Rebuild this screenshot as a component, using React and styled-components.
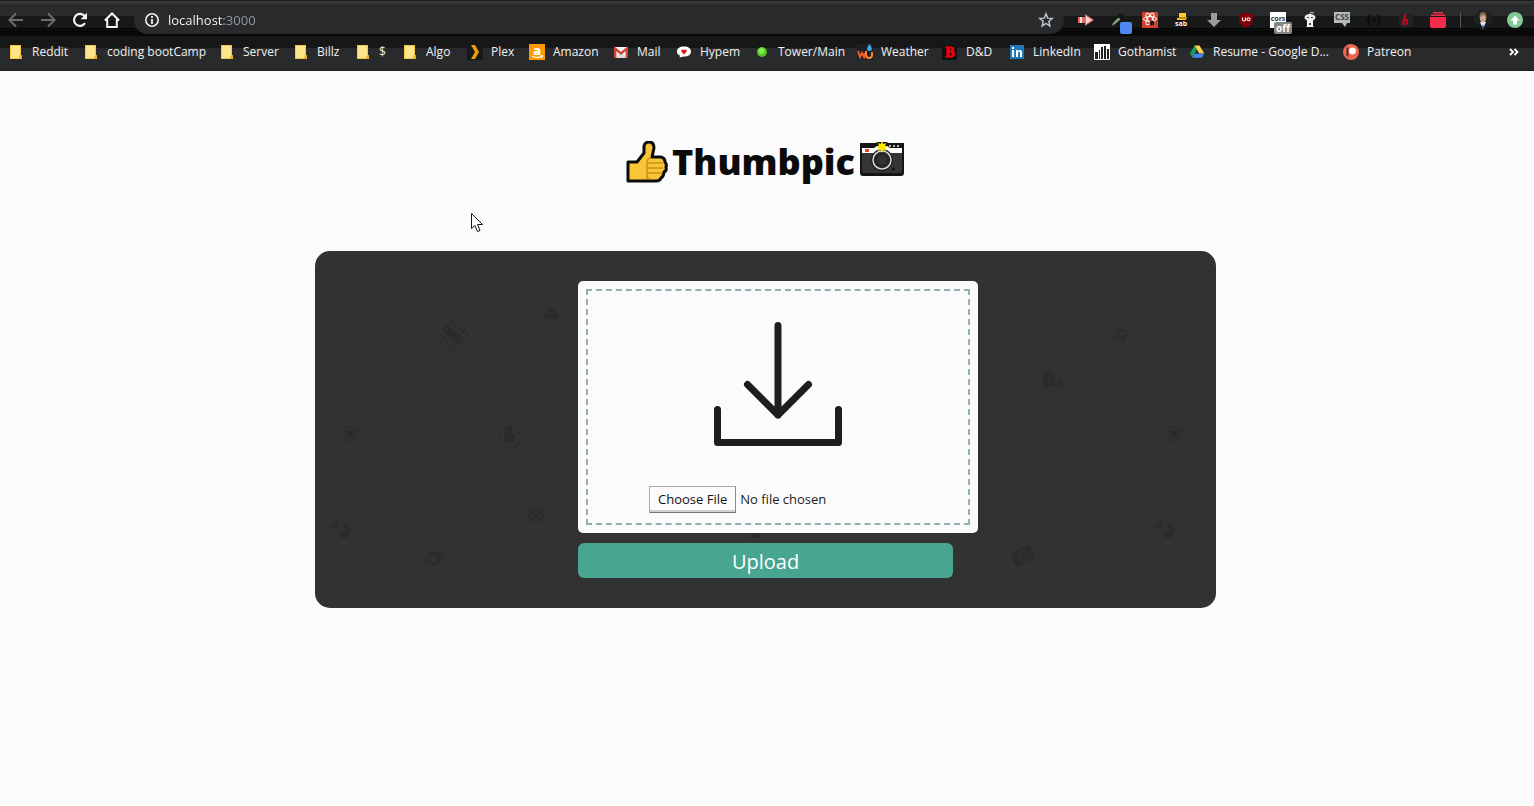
import React from "react";
import styled, { createGlobalStyle } from "styled-components";

const ui = `"Segoe UI", "Open Sans", "Noto Sans", sans-serif`;

const GlobalStyle = createGlobalStyle`
  *, *::before, *::after { box-sizing: border-box; }
  body {
    margin: 0;
    background: #fbfbfb;
    font-family: ${ui};
    color: #1e1f1c;
  }
`;

/* ---------- browser chrome ---------- */

const Toolbar = styled.div`
  display: flex;
  align-items: center;
  height: 36px;
  padding: 6px 3px 2px 0;
  background: linear-gradient(
    #1c1c1c 0 1px, #3a3a3a 1px 2px, #333334 2px 4px, #292a2c 4px 16px,
    #181818 16px 28px, #050505 28px 29px, #101010 29px 30px, #080808 30px 36px
  );
`;

const IconButton = styled.button`
  display: grid;
  place-items: center;
  flex: none;
  width: 32px;
  height: 28px;
  padding: 0;
  border: 0;
  background: none;
  color: ${(p) => (p.$dim ? "#6d6d6d" : "#f5f5f5")};
  svg { width: 16px; height: 16px; overflow: visible; }
`;

const AddressBar = styled.div`
  display: flex;
  align-items: center;
  flex: 1;
  min-width: 0;
  height: 28px;
  margin: 0 6px;
  padding: 0 10px;
  gap: 8px;
  border-radius: 14px;
  background: #292a2c;
  color: #eeeeee;
  svg { flex: none; width: 16px; height: 16px; }
`;

const AddressInput = styled.input`
  flex: 1;
  min-width: 0;
  padding: 0;
  border: 0;
  outline: 0;
  font: 13px/20px ${ui};
  color: transparent;
  background: linear-gradient(90deg, #ffffff 56px, #949ba2 56px);
  background-clip: text;
  -webkit-background-clip: text;
`;

const Divider = styled.span`
  flex: none;
  width: 1px;
  height: 16px;
  margin: 0 6px;
  background: #555555;
`;

const Bookmarks = styled.nav`
  display: flex;
  align-items: center;
  height: 35px;
  padding: 0 12px 4px 8px;
  overflow: hidden;
  background: linear-gradient(#171717 0 12px, #292a2c 12px 34px, #1f1f20 34px 35px);
`;

const Bookmark = styled.a`
  display: flex;
  align-items: center;
  flex: none;
  gap: 8px;
  width: ${(p) => p.$width}px;
  color: #f1f1f1;
  font-size: 12px;
  line-height: 16px;
  text-decoration: none;
  white-space: nowrap;
  svg { flex: none; width: 16px; height: 16px; overflow: visible; }
`;

const MoreButton = styled.button`
  margin-left: auto;
  padding: 0;
  border: 0;
  background: none;
  color: #ffffff;
  svg { display: block; width: 16px; height: 16px; }
`;

/* ---------- page ---------- */

const Page = styled.main`
  position: relative;
  display: flex;
  flex-direction: column;
  align-items: center;
  gap: 68px;
  padding: 70px 3px 64px 0;
`;

const Title = styled.h1`
  display: flex;
  align-items: center;
  gap: 4px;
  height: 42px;
  margin: 0;
  color: #0b0b0b;
  font: 800 36px/42px "Baloo", "Open Sans", sans-serif;
`;

const Thumb = styled.svg`
  width: 42px;
  height: 42px;
`;

const Camera = styled.svg`
  width: 46px;
  height: 36px;
  align-self: flex-start;
`;

const Cursor = styled.svg`
  position: absolute;
  left: 471px;
  top: 142px;
  width: 13px;
  height: 20px;
`;

const Card = styled.section`
  position: relative;
  width: 90%;
  max-width: 901px;
  padding: 30px;
  border-radius: 15px;
  background: #323232;
  overflow: hidden;
`;

const Pattern = styled.svg`
  position: absolute;
  inset: 0;
  width: 100%;
  height: 100%;
  color: #2a2b2c;
`;

const UploadForm = styled.form`
  position: relative;
  display: flex;
  flex-direction: column;
  gap: 10px;
  width: 375px;
  margin: 0 auto;
`;

const DropZone = styled.label`
  display: flex;
  flex-direction: column;
  align-items: center;
  gap: 37px;
  width: 400px;
  padding: 40px 0 20px;
  border-radius: 5px;
  background: #fbfbfb;
  outline: 2px dashed #92b0b3;
  outline-offset: -10px;
`;

const DropArrow = styled.svg`
  width: 130px;
  height: 128px;
`;

const FileInput = styled.input`
  width: 258px;
  height: 27px;
  color: #1c1c1c;
  font: 13px/19px ${ui};
  &::file-selector-button {
    height: 27px;
    padding: 1px 8px;
    border: 1px solid #a9a9a9;
    border-right-color: #8a8a8a;
    border-bottom-color: #757575;
    border-radius: 1px;
    background: #fbfbfb;
    box-shadow: inset 0 -2px #d2d2d2;
    color: #111111;
    font: inherit;
  }
`;

const UploadButton = styled.button`
  height: 35px;
  padding: 2px 0 0;
  border: 0;
  border-radius: 6px;
  background: #47a590;
  color: #ffffff;
  font: 20px/30px ${ui};
`;

/* ---------- icons ---------- */

const Svg = ({ children, ...rest }) => (
  <svg viewBox="0 0 16 16" fill="none" aria-hidden="true" {...rest}>{children}</svg>
);

const icons = {
  back: <Svg stroke="currentColor" strokeWidth="2"><path d="M15 8H2M8 1.500 1.500 8 8 14.500" /></Svg>,
  forward: <Svg stroke="currentColor" strokeWidth="2"><path d="M1 8h13M8 1.500 14.500 8 8 14.500" /></Svg>,
  reload: (
    <Svg>
      <path d="M13 11.200A6 6 0 1 1 12.600 4" stroke="currentColor" strokeWidth="2.200" />
      <path d="M15 .8v6.400H8.600z" fill="currentColor" />
    </Svg>
  ),
  home: <Svg stroke="currentColor" strokeWidth="2"><path d="M.8 8.500 8 1.500l7.200 7M3.200 7v8h9.600V7" /></Svg>,
  info: (
    <Svg>
      <circle cx="8" cy="8" r="6.200" stroke="currentColor" strokeWidth="1.600" />
      <path d="M8 7v5M8 4v2" stroke="currentColor" strokeWidth="1.800" />
    </Svg>
  ),
  star: <Svg stroke="#c3cbd0" strokeWidth="1.400"><path d="m8 1.800 1.700 4.300 4.600.3-3.500 3 1.100 4.500L8 11.500l-3.900 2.400 1.100-4.500-3.500-3 4.600-.3z" /></Svg>,
  folder: (
    <Svg>
      <path d="M2 1h11v10l1 1v3H2z" fill="#f2c744" />
      <path d="M3 2h9v9l-1 3H3z" fill="#fde58c" />
      <path d="M12 11h2v4h-3z" fill="#e8b52c" />
    </Svg>
  ),
  plex: <Svg><path d="M0 0h16v16H0z" fill="#19191a" /><path d="M4 1h4l4 7-4 7H4l4-7z" fill="#e5a00d" /></Svg>,
  amazon: (
    <Svg>
      <path d="M0 0h16v16H0z" fill="#f90" />
      <text x="8" y="11" textAnchor="middle" fill="#fff" fontSize="13" fontWeight="800" fontFamily="Open Sans, sans-serif">a</text>
      <path d="M3 12q5 3 10 0M11.500 11.500l2 .3-.5 2" stroke="#fff" strokeWidth="1.100" />
    </Svg>
  ),
  mail: (
    <Svg>
      <path d="M1 3h14v11H1z" fill="#f5f5f5" />
      <path d="m1 14 7-6 7 6z" fill="#dedede" />
      <path d="M2.200 14V4.500L8 9.500l5.800-5V14" stroke="#d54335" strokeWidth="2.400" />
    </Svg>
  ),
  hypem: (
    <Svg>
      <path d="M8 2.500c4.500 0 7 2 7 5s-2.500 5-7 5l-4.500 1 .5-2C2 11 1 9.500 1 7.500c0-3 2.500-5 7-5z" fill="#fff" />
      <path d="M8 10.500 5.600 8C4.500 6.200 6.500 4.500 8 6 9.500 4.500 11.500 6.200 10.400 8z" fill="#e3131b" />
    </Svg>
  ),
  tower: <Svg><circle cx="8" cy="8" r="5" fill="#4fc520" /><circle cx="7.500" cy="7" r="3" fill="#86e85a" /></Svg>,
  weather: (
    <Svg>
      <path d="M0 0h16v16H0z" fill="#1d2024" />
      <path d="M1 7l2 6 2-4 2 4 1-4" stroke="#f15a29" strokeWidth="2" />
      <path d="M9 7v4q0 3 3 3t3-3V8" stroke="#f5882c" strokeWidth="2" />
      <path d="M12.500 0q-5 7 0 7t0-7" fill="#3eaee8" />
    </Svg>
  ),
  dnd: (
    <Svg>
      <path d="M0 1h15v15H0z" fill="#111" />
      <text x="8" y="13" textAnchor="middle" fill="#f0000c" stroke="#f0000c" strokeWidth="1" fontSize="14" fontWeight="700" fontFamily="Liberation Serif, serif">B</text>
    </Svg>
  ),
  linkedin: (
    <Svg>
      <path d="M1 1h14v14H1z" fill="#2478b7" />
      <path d="M3 6h2v7H3zM3 3h2v2H3zM7 6h2v1q4-3 4 2v4h-2V9q0-2-2-.5V13H7z" fill="#fff" />
    </Svg>
  ),
  gothamist: (
    <Svg>
      <path d="M0 0h16v16H0z" fill="#fff" />
      <path d="M1 8h3v7H1zM5 6h1v9H5zM7 3h2v12H7zM10 2h2v13h-2zM13 5h2v10h-2z" fill="#222" />
    </Svg>
  ),
  drive: (
    <Svg>
      <path d="M5.500 1.500 1 9.500l2.300 4L8 5.500z" fill="#149e5e" />
      <path d="M5.500 1.500h5l4.800 8h-5z" fill="#ffd04b" />
      <path d="M5.500 9.800h9.800l-2.500 4H3.300z" fill="#4286f5" />
    </Svg>
  ),
  patreon: (
    <Svg>
      <circle cx="8" cy="8" r="8" fill="#f0664f" />
      <path d="M3.500 3.500h1.800v9H3.500z" fill="#3a2a42" />
      <circle cx="9.500" cy="7" r="3.400" fill="#fff" />
    </Svg>
  ),
  more: <Svg stroke="currentColor" strokeWidth="1.800"><path d="m4 5 3 3-3 3M8.500 5l3 3-3 3" /></Svg>,
};

const extensions = [
  ["Video", <Svg><path d="M0 5h7V2l9 6-9 6v-3H0z" fill="#e06c68" /><path d="M2 5h2v6H2zM8 4l6 4-6 4z" fill="#ffd8d2" /></Svg>],
  ["Color picker", <Svg><path d="m2 14 1-3 7-7 2 2-7 6z" fill="#87a88b" /><path d="m8 3 5 5M10 5l3-3" stroke="#161616" strokeWidth="3" /><rect x="10" y="10" width="12" height="12" rx="2" fill="#4f87f5" /></Svg>],
  ["React tools", <Svg><path d="M0 0h16v16H0z" fill="#d2402e" /><g stroke="#fff"><ellipse cx="8" cy="7" rx="6.500" ry="2.500" /><ellipse cx="8" cy="7" rx="6.500" ry="2.500" transform="rotate(60 8 7)" /><ellipse cx="8" cy="7" rx="6.500" ry="2.500" transform="rotate(120 8 7)" /></g><circle cx="10" cy="11" r="2.500" fill="#2b1512" /></Svg>],
  ["Sab", <Svg><path d="M5 1h7v7H3V6h2z" fill="#ffcc25" /><path d="M5 5h8v2H4z" fill="#c48b12" /><path d="M1 8h12v7H1z" fill="#111" /><text x="7" y="14" textAnchor="middle" fill="#fff" fontSize="7" fontWeight="700" fontFamily="Open Sans, sans-serif">sab</text></Svg>],
  ["Download", <Svg><path d="M5 1h6v7h4l-7 7-7-7h4z" fill="#9b9b9b" /></Svg>],
  ["Blocker", <Svg><path d="M8 .5q3 2 7 1.500v5q0 6-7 9-7-3-7-9V2q4 .5 7-1.500z" fill="#810008" /><path d="M4.500 5.500v2q0 1.500 1.500 1.500t1.500-1.500v-2" stroke="#fff" strokeWidth="1.100" /><circle cx="10.500" cy="7.300" r="1.500" stroke="#fff" strokeWidth="1.100" /></Svg>],
  ["CORS", <Svg><path d="M0 0h16v16H0z" fill="#fff" /><text x="8" y="9" textAnchor="middle" fill="#333" fontSize="7" fontWeight="700" fontFamily="Open Sans, sans-serif">cors</text><rect x="4" y="10" width="18" height="12" rx="2" fill="#858585" /><text x="13" y="20" textAnchor="middle" fill="#fff" fontSize="10" fontWeight="700" fontFamily="Open Sans, sans-serif">off</text></Svg>],
  ["Reddit", <Svg><ellipse cx="8" cy="5.500" rx="5.500" ry="3.500" fill="#eee" /><path d="M5 8h6v6l1 1H4l1-1z" fill="#f4f4f4" /><path d="m8 2 1-2 3 1" stroke="#ccc" /><path d="M5 5h2v1H5zM9 5h2v1H9zM7 11h2v2H7z" fill="#444" /></Svg>],
  ["CSS viewer", <Svg><path d="M0 0h16v11h-3l-2 4-3-4H0z" fill="#b9b9b9" /><text x="8" y="8" textAnchor="middle" fill="#444" fontSize="8" fontWeight="700" fontFamily="Open Sans, sans-serif">CSS</text></Svg>],
  ["JSON", <Svg><path d="M5 3q-2 0-2 2v2L1 8l2 1v2q0 2 2 2M11 3q2 0 2 2v2l2 1-2 1v2q0 2-2 2M6 7h4M6 9.500h4" stroke="#070707" strokeWidth="1.100" /></Svg>],
  ["Honey", <Svg><rect x="1" y="2" width="14" height="13" rx="1" fill="#232325" /><path d="m7 2-2 11M5 9q5-3 4 1l-1 3" stroke="#c40c19" strokeWidth="2" /></Svg>],
  ["Stack", <Svg><path d="M3 0h10v1.500H3zM1 2.500h14V4H1zM0 5h16v9q0 2-2 2H2q-2 0-2-2z" fill="#f52b49" /></Svg>],
];

const bookmarks = [
  ["Reddit", "folder", 75], ["coding bootCamp", "folder", 136], ["Server", "folder", 74],
  ["Billz", "folder", 62], ["$", "folder", 47], ["Algo", "folder", 65], ["Plex", "plex", 62],
  ["Amazon", "amazon", 84], ["Mail", "mail", 63], ["Hypem", "hypem", 78],
  ["Tower/Main", "tower", 103], ["Weather", "weather", 85], ["D&D", "dnd", 67],
  ["LinkedIn", "linkedin", 85], ["Gothamist", "gothamist", 95],
  ["Resume - Google D...", "drive", 154], ["Patreon", "patreon", 81],
];

/* ---------- card background drawings ---------- */

const rays = (count, from, to) =>
  Array.from({ length: count }, (_, i) => (
    <path key={i} d={`M0 ${from}V${to}`} transform={`rotate(${(360 / count) * i})`} stroke="currentColor" strokeWidth="1.500" />
  ));

const Sun = ({ x, y }) => (
  <g transform={`translate(${x} ${y})`}>
    <circle r="4.300" fill="currentColor" />
    {rays(12, 6, 8.5)}
  </g>
);

const AutoFlash = ({ x, y }) => (
  <g transform={`translate(${x} ${y})`} fill="currentColor">
    <text x="-10" y="1" fontSize="13" fontWeight="700" fontFamily="Open Sans, sans-serif" transform="rotate(25 -6 -3)">A</text>
    <path d="M11-8 0-1l6 3-7 3-1 5 9 0-1-3 5-5-5-3z" />
  </g>
);

function CardPattern() {
  return (
    <Pattern viewBox="0 0 901 357" preserveAspectRatio="xMidYMid slice" fill="none" aria-hidden="true">
      <path d="M230 68q-4-4 2-6 0-6 6-4l3 3q5 3 1 7z" fill="currentColor" />
      <g transform="translate(138.500 84) rotate(42)">
        <path d="M-12-4h24v8h-24z" fill="currentColor" />
        <path d="M-10-7v-4M-5-7v-5M0-7v-4M5-7v-5M10-7v-4M-10 7v4M-5 7v5M0 7v4M5 7v5M10 7v4" stroke="currentColor" strokeWidth="1.800" />
        <circle cx="-9" r="1" fill="#323232" /><circle cx="9" r="1" fill="#323232" />
      </g>
      <Sun x={35.5} y={183} />
      <Sun x={859.5} y={183} />
      <g transform="translate(194.500 187)">
        <circle r="6" fill="currentColor" />
        <path d="M-3-12h6v7h-6z" fill="currentColor" />
        {rays(12, 9, 12)}
      </g>
      <path d="M213.500 258.500h15v12h-15z" stroke="currentColor" />
      <path d="m215 260 4 2-4 3zM227 260l-4 2 4 3zM215 269l4-2M227 269l-4-2" stroke="currentColor" strokeWidth="1.500" />
      <circle cx="221" cy="265" r="2" fill="currentColor" />
      <AutoFlash x={26} y={277} />
      <AutoFlash x={850} y={277} />
      <g transform="translate(119 307.500) rotate(-24)" stroke="currentColor" strokeWidth="1.800">
        <path d="M-10 0q9-12 20 0-11 12-20 0z" /><circle r="4.500" strokeWidth="2.500" />
      </g>
      <g transform="translate(806 84) rotate(28)">
        <path d="M-5.500-5.500h11v11h-11z" stroke="currentColor" strokeWidth="1.500" />
        <path d="m-4 3 3-4 2 2 3-5v7zM-4-4h4v2h-4z" fill="currentColor" />
      </g>
      <path d="m727 126 7-7 7 7-1 1v9h-12v-9z" fill="currentColor" />
      <path d="m742 127 8 9M742 131l5 5M742 135l2 2" stroke="currentColor" strokeWidth="1.200" />
      <circle cx="734" cy="128" r="2" fill="#323232" />
      <g transform="translate(708 305) rotate(-28)">
        <path d="M-11-7h6l2-2h6l2 2h6V7h-22z" fill="currentColor" />
        <circle r="4.500" stroke="#323232" strokeWidth="1.500" />
      </g>
      <path d="m436 287 4-8 6 6-5 2z" fill="currentColor" />
    </Pattern>
  );
}

export default function App() {
  return (
    <>
      <GlobalStyle />
      <header>
        <Toolbar>
          <IconButton $dim aria-label="Back">{icons.back}</IconButton>
          <IconButton $dim aria-label="Forward">{icons.forward}</IconButton>
          <IconButton aria-label="Reload">{icons.reload}</IconButton>
          <IconButton aria-label="Home">{icons.home}</IconButton>
          <AddressBar>
            {icons.info}
            <AddressInput type="text" aria-label="Address" defaultValue="localhost:3000" spellCheck={false} />
            {icons.star}
          </AddressBar>
          {extensions.map(([name, icon]) => (
            <IconButton key={name} aria-label={name}>{icon}</IconButton>
          ))}
          <Divider />
          <IconButton aria-label="Profile">
            <Svg>
              <circle cx="8" cy="8" r="9" fill="#20231d" />
              <path d="M2 15q1-5 6-5t6 5q-6 4-12 0z" fill="#121a2c" />
              <path d="m5 10 3 7 3-7z" fill="#e8edf3" />
              <path d="m8 12 1 4H7z" fill="#1b2a4a" />
              <ellipse cx="8" cy="6" rx="3" ry="4.500" fill="#d3a98e" />
              <path d="M4.500 6Q4 0 8 0t3.500 6Q10 3 8 3 6 3 4.500 6z" fill="#8a6a48" />
            </Svg>
          </IconButton>
          <IconButton aria-label="Update">
            <Svg><circle cx="8" cy="8" r="8" fill="#83c995" /><path d="m8 3.500 4.500 5H10v4H6v-4H3.500z" fill="#fff" /></Svg>
          </IconButton>
        </Toolbar>
        <Bookmarks aria-label="Bookmarks">
          {bookmarks.map(([label, icon, width]) => (
            <Bookmark key={label} href="#" $width={width}>{icons[icon]}{label}</Bookmark>
          ))}
          <MoreButton aria-label="More bookmarks">{icons.more}</MoreButton>
        </Bookmarks>
      </header>
      <Page>
        <Title>
          <Thumb viewBox="0 0 42 42" aria-hidden="true">
            <path d="M2 21h9l7-9V5q1-4 5-4 5 0 5 6l-2 9h9q4 1 4 5 2 2 1 5 1 4-2 5 0 4-3 6-1 3-5 3H2z" fill="#f6c638" stroke="#0c0c0c" strokeWidth="3" strokeLinejoin="round" />
            <path d="M25 17q-4 0-4 5v15l3 1M22 22h15M22 27h15M22 32h14" stroke="#d18d18" strokeWidth="1.500" fill="none" />
          </Thumb>
          Thumbpic
          <Camera viewBox="0 0 46 36" aria-hidden="true">
            <path d="M1 2h15l3-1h8l3 1h15v30q0 3-3 3H4q-3 0-3-3z" fill="#151515" />
            <path d="M3 7h12l3-2h10l3 2h12v5H3z" fill="#fff" />
            <path d="M3 12h40v18q0 2-2 2H5q-2 0-2-2z" fill="#353535" />
            <path d="M31 4v2M35 4v2M39 4v2" stroke="#eee" strokeWidth="1.500" />
            <path d="M6 8h4v3H6z" fill="#e7412c" />
            <circle cx="23" cy="19" r="11" fill="#222" />
            <circle cx="23" cy="19" r="9" fill="#242628" stroke="#d7d7d7" strokeWidth="1.500" />
            <circle cx="23" cy="19" r="5" fill="#303336" />
            <circle cx="34.500" cy="28" r="1.500" fill="#111" />
            <path d="m23 0 1.300 3 2.700-1-.8 2.700L29 6l-2.800 1.200.8 2.800-2.700-1L23 12l-1.300-3-2.700 1 .8-2.800L17 6l2.800-1.300L19 2l2.700 1z" fill="#ffe600" />
          </Camera>
        </Title>
        <Card>
          <CardPattern />
          <UploadForm onSubmit={(e) => e.preventDefault()}>
            <DropZone>
              <DropArrow viewBox="0 0 130 128" fill="none" stroke="#1e1f1c" strokeWidth="7" strokeLinecap="round" strokeLinejoin="round" aria-hidden="true">
                <path d="M65 4.500V94M34.500 63.500 65 94l30.500-30.500M4.500 88.500v33h121v-33" />
              </DropArrow>
              <FileInput type="file" aria-label="Image file" />
            </DropZone>
            <UploadButton type="submit">Upload</UploadButton>
          </UploadForm>
        </Card>
        <Cursor viewBox="0 0 13 20" aria-hidden="true">
          <path d="M.5.500v15l3.500-3 2.500 6 2.500-1-2.500-6h5z" fill="#fff" stroke="#15151f" strokeWidth="1" />
        </Cursor>
      </Page>
    </>
  );
}
